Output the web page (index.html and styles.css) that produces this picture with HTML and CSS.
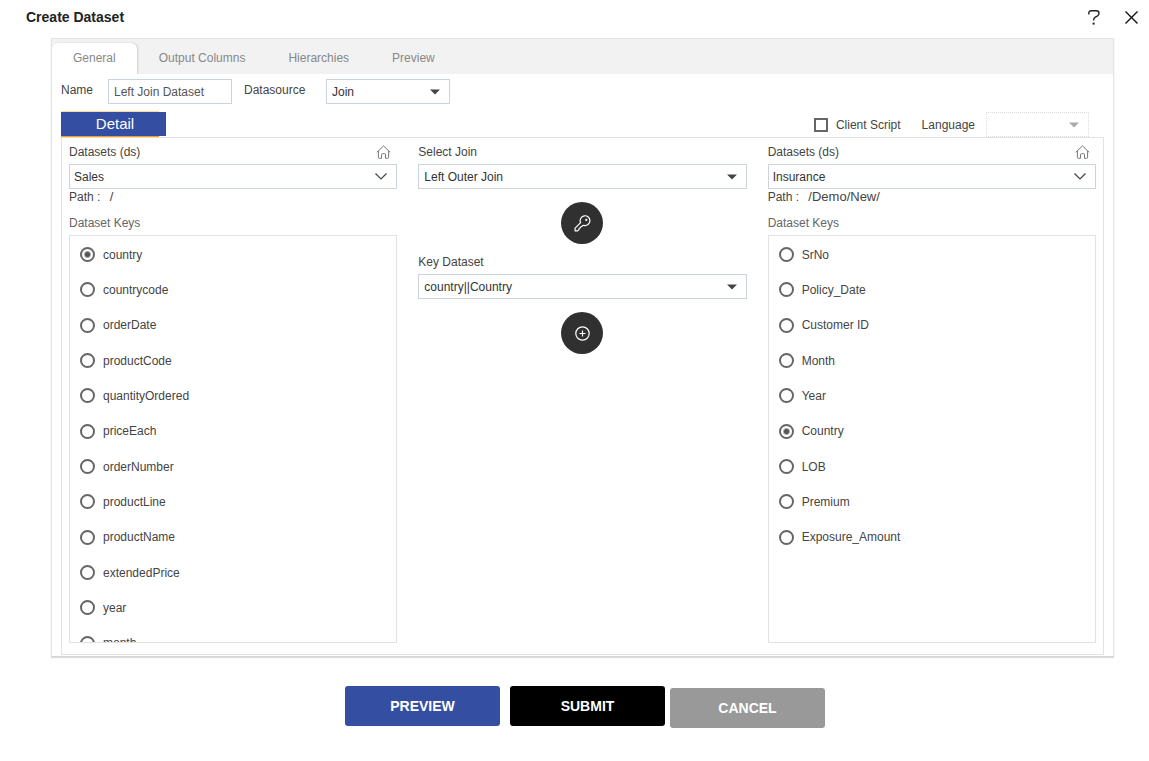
FILE: index.html
```html
<!DOCTYPE html>
<html lang="en">
<head>
<meta charset="utf-8">
<title>Create Dataset</title>
<link rel="stylesheet" href="styles.css">
</head>
<body>
<svg class="sprite" aria-hidden="true">
  <symbol id="caret" viewBox="0 0 10 6"><path d="M0 0.5h10L5 5.5z" fill="currentColor"/></symbol>
  <symbol id="chevron" viewBox="0 0 12 7"><path d="M0.5 0.5L6 6L11.5 0.5" fill="none" stroke="currentColor" stroke-width="1.2"/></symbol>
  <symbol id="home" viewBox="0 0 15 14"><path d="M0.8 7.3L7.5 0.9L14.2 7.3M2.4 6v6.5q0 .8.8.8h2.3V9.7q0-1 1-1h2q1 0 1 1v3.6h2.3q.8 0 .8-.8V6" fill="none" stroke="currentColor" stroke-width="1"/></symbol>
</svg>

<header class="title-bar">
  <h1 class="title">Create Dataset</h1>
  <div class="title-actions">
    <button class="icon-button" type="button" aria-label="Help">
      <svg width="12" height="15" viewBox="0 0 12 15"><path d="M0.8 4.4V3.200Q0.800 0.800 3.200 0.800H8.200Q11 0.800 11 3.300 11 5.200 9.200 6.200L7.300 7.200Q5.600 8.200 5.600 10.400" fill="none" stroke="#222" stroke-width="1.400"/><rect x="4.600" y="12.600" width="2" height="2" fill="#222"/></svg>
    </button>
    <button class="icon-button" type="button" aria-label="Close">
      <svg width="13" height="13" viewBox="0 0 13 13"><path d="M0.500 0.500L12.500 12.500M12.500 0.500L0.500 12.500" fill="none" stroke="#111" stroke-width="1.400"/></svg>
    </button>
  </div>
</header>

<main class="panel">
  <nav class="tabs" role="tablist">
    <button class="tab tab-active" type="button" role="tab" aria-selected="true">General</button>
    <button class="tab" type="button" role="tab" aria-selected="false">Output Columns</button>
    <button class="tab" type="button" role="tab" aria-selected="false">Hierarchies</button>
    <button class="tab" type="button" role="tab" aria-selected="false">Preview</button>
  </nav>

  <div class="panel-body">
    <div class="fields">
      <label class="field-label name-label" for="name">Name</label>
      <input class="control short" id="name" type="text" value="Left Join Dataset">
      <label class="field-label source-label" for="source">Datasource</label>
      <div class="select-wrap short">
        <select class="control" id="source"><option>Join</option></select>
        <svg class="arrow caret"><use href="#caret"/></svg>
      </div>
    </div>

    <div class="detail-bar">
      <button class="detail-tab" type="button">Detail</button>
      <div class="script-tools">
        <label class="check-label"><input class="check" type="checkbox">Client Script</label>
        <label for="language">Language</label>
        <div class="select-wrap language-wrap">
          <select class="control language" id="language" disabled><option></option></select>
          <svg class="arrow caret muted"><use href="#caret"/></svg>
        </div>
      </div>
    </div>

    <section class="detail">
      <div class="column">
        <div class="column-head">
          <label for="left-ds">Datasets (ds)</label>
          <button class="icon-button" type="button" aria-label="Home"><svg class="home"><use href="#home"/></svg></button>
        </div>
        <div class="select-wrap">
          <select class="control dataset" id="left-ds"><option>Sales</option></select>
          <svg class="arrow chevron"><use href="#chevron"/></svg>
        </div>
        <p class="path">Path : <span class="path-value">/</span></p>
        <h2 class="keys-title">Dataset Keys</h2>
        <div class="keys">
          <div class="key-list">
            <label class="key"><input class="radio" type="radio" name="left" checked>country</label>
            <label class="key"><input class="radio" type="radio" name="left">countrycode</label>
            <label class="key"><input class="radio" type="radio" name="left">orderDate</label>
            <label class="key"><input class="radio" type="radio" name="left">productCode</label>
            <label class="key"><input class="radio" type="radio" name="left">quantityOrdered</label>
            <label class="key"><input class="radio" type="radio" name="left">priceEach</label>
            <label class="key"><input class="radio" type="radio" name="left">orderNumber</label>
            <label class="key"><input class="radio" type="radio" name="left">productLine</label>
            <label class="key"><input class="radio" type="radio" name="left">productName</label>
            <label class="key"><input class="radio" type="radio" name="left">extendedPrice</label>
            <label class="key"><input class="radio" type="radio" name="left">year</label>
            <label class="key"><input class="radio" type="radio" name="left">month</label>
          </div>
        </div>
      </div>

      <div class="column">
        <div class="column-head"><label for="join">Select Join</label></div>
        <div class="select-wrap">
          <select class="control" id="join"><option>Left Outer Join</option></select>
          <svg class="arrow caret"><use href="#caret"/></svg>
        </div>
        <button class="round-button" type="button" aria-label="Set key">
          <svg width="17" height="17" viewBox="0 0 17 17" fill="none" stroke="#fff" stroke-width="1.200" stroke-linejoin="round"><path d="M6.600 7.700A4.900 4.900 0 1 1 9.800 10.400L8.700 10.500 8 11.400 6.900 11.800 6.300 12.800 5.200 13.200 5 14.600 3.600 15.900H1.100V13.200Z"/><circle cx="12.300" cy="4.900" r="0.500"/></svg>
        </button>
        <div class="column-head"><label for="key-dataset">Key Dataset</label></div>
        <div class="select-wrap">
          <select class="control" id="key-dataset"><option>country||Country</option></select>
          <svg class="arrow caret"><use href="#caret"/></svg>
        </div>
        <button class="round-button" type="button" aria-label="Add">
          <svg width="15" height="15" viewBox="0 0 15 15" fill="none" stroke="#fff" stroke-width="1.200"><circle cx="7.500" cy="7.500" r="6.700"/><path d="M4.500 7.500h6M7.500 4.500v6"/></svg>
        </button>
      </div>

      <div class="column">
        <div class="column-head">
          <label for="right-ds">Datasets (ds)</label>
          <button class="icon-button" type="button" aria-label="Home"><svg class="home"><use href="#home"/></svg></button>
        </div>
        <div class="select-wrap">
          <select class="control dataset" id="right-ds"><option>Insurance</option></select>
          <svg class="arrow chevron"><use href="#chevron"/></svg>
        </div>
        <p class="path">Path : <span class="path-value">/Demo/New/</span></p>
        <h2 class="keys-title">Dataset Keys</h2>
        <div class="keys">
          <div class="key-list">
            <label class="key"><input class="radio" type="radio" name="right">SrNo</label>
            <label class="key"><input class="radio" type="radio" name="right">Policy_Date</label>
            <label class="key"><input class="radio" type="radio" name="right">Customer ID</label>
            <label class="key"><input class="radio" type="radio" name="right">Month</label>
            <label class="key"><input class="radio" type="radio" name="right">Year</label>
            <label class="key"><input class="radio" type="radio" name="right" checked>Country</label>
            <label class="key"><input class="radio" type="radio" name="right">LOB</label>
            <label class="key"><input class="radio" type="radio" name="right">Premium</label>
            <label class="key"><input class="radio" type="radio" name="right">Exposure_Amount</label>
          </div>
        </div>
      </div>
    </section>
  </div>
</main>

<footer class="actions">
  <button class="action preview" type="button">PREVIEW</button>
  <button class="action submit" type="button">SUBMIT</button>
  <button class="action cancel" type="button">CANCEL</button>
</footer>
</body>
</html>
```

FILE: styles.css
```css
* {
  box-sizing: border-box;
}

body {
  margin: 0;
  background: #fff;
  color: #444;
  font: 12px/16px "Liberation Sans", Arial, sans-serif;
}

button,
input,
select {
  font: inherit;
  color: inherit;
}

button {
  padding: 0;
  border: 0;
  background: none;
}

.sprite {
  display: none;
}

/* Title bar */
.title-bar {
  display: flex;
  align-items: center;
  justify-content: space-between;
  height: 34px;
  padding: 0 11px 0 26px;
}

.title {
  margin: 0;
  font-size: 14px;
  color: #222;
}

.title-actions {
  display: flex;
  align-items: center;
  gap: 25px;
}

.icon-button {
  display: flex;
}

/* Tabbed panel */
.panel {
  margin: 4px 35px 0 51px;
  border: 1px solid #e4e4e4;
  border-bottom-color: #d4d4d4;
  box-shadow: 0 1px 1px #ddd;
}

.tabs {
  display: flex;
  gap: 1px;
  padding-top: 4px;
  background: #f2f2f2;
}

.tab {
  height: 31px;
  padding: 0 21px 1px;
  border-radius: 6px 6px 0 0;
  color: #888;
}

.tab-active {
  background: #fff;
  box-shadow: 1px 0 2px #ccc;
  clip-path: inset(-2px -3px 0 0);
}

.panel-body {
  padding: 5px 9px 1px;
}

.fields {
  display: flex;
  align-items: flex-start;
}

.field-label {
  padding-top: 3px;
}

.name-label {
  width: 47px;
}

.source-label {
  width: 82px;
  margin-left: 12px;
}

.control {
  width: 100%;
  height: 25px;
  padding: 0 5px;
  border: 1px solid #ccd2e0;
  border-radius: 0;
  outline: 0;
  appearance: none;
  background: #fff;
  color: #333;
}

input.control {
  color: #555;
}

.control.dataset {
  padding: 0 4px;
}

.short {
  width: 124px;
}

.select-wrap {
  display: grid;
  align-items: center;
}

.select-wrap > * {
  grid-area: 1 / 1;
}

.arrow {
  justify-self: end;
  margin-right: 10px;
  color: #444;
  pointer-events: none;
}

.caret {
  width: 10px;
  height: 6px;
}

.chevron {
  width: 12px;
  height: 7px;
}

.muted {
  color: #aaa;
}

/* Detail section */
.detail-bar {
  display: flex;
  align-items: flex-end;
  justify-content: space-between;
  margin-top: 7px;
}

.detail-tab {
  width: 105px;
  height: 26px;
  padding-left: 3px;
  background:
    linear-gradient(#344ea1, #344ea1) left center / 100% 24px no-repeat,
    linear-gradient(#fd9, #f90) left top / 98px 100% no-repeat;
  color: #fff;
  font-size: 15px;
}

.script-tools {
  display: flex;
  align-items: center;
  padding-right: 15px;
}

.check-label {
  display: flex;
  align-items: center;
  gap: 8px;
  margin-right: 21px;
}

.check {
  width: 14px;
  height: 14px;
  margin: 0;
  border: 2px solid #666;
  appearance: none;
}

.language-wrap {
  width: 103px;
  margin-left: 11px;
}

.control.language {
  border: 1px dotted #ddd;
  opacity: 1;
}

.detail {
  display: grid;
  grid-template-columns: repeat(3, minmax(0, 1fr));
  gap: 21px;
  padding: 6px 7px 11px;
  border: 1px solid #e2e2e2;
}

.column {
  display: flex;
  flex-direction: column;
}

.column-head {
  display: flex;
  justify-content: space-between;
  align-items: center;
  padding: 0 6px 4px 0;
  height: 20px;
}

.home {
  width: 15px;
  height: 14px;
  color: #777;
}

.path {
  margin: 0;
}

.path-value {
  margin-left: 6px;
  font-size: 13px;
}

.keys-title {
  margin: 10px 0 4px;
  font-size: 12px;
  font-weight: 400;
  color: #666;
}

.keys {
  height: 408px;
  padding: 1px 10px;
  border: 1px solid #e2e2e2;
  overflow-y: auto;
  scrollbar-width: none;
}

.key-list {
  display: grid;
  grid-template-rows: repeat(12, 1fr);
  height: 424px;
}

.key {
  display: flex;
  align-items: center;
  gap: 8px;
}

.radio {
  width: 15px;
  height: 15px;
  margin: 0;
  border: 2px solid #666;
  border-radius: 50%;
  appearance: none;
}

.radio:checked {
  background: radial-gradient(circle, #555 0 2px, transparent 4px);
}

.round-button {
  display: flex;
  align-items: center;
  justify-content: center;
  align-self: center;
  width: 42px;
  height: 42px;
  margin: 13px 0 10px;
  border-radius: 50%;
  background: #303030;
}

/* Footer buttons */
.actions {
  display: flex;
  justify-content: center;
  align-items: flex-start;
  padding: 29px 30px 32px 51px;
}

.action {
  width: 155px;
  height: 40px;
  padding-bottom: 1px;
  border-radius: 3px;
  color: #fff;
  font-size: 14px;
  font-weight: 700;
}

.preview {
  background: #344ea1;
}

.submit {
  margin-left: 10px;
  background: #000;
}

.cancel {
  margin: 2px 0 0 5px;
  background: #999;
}
```
